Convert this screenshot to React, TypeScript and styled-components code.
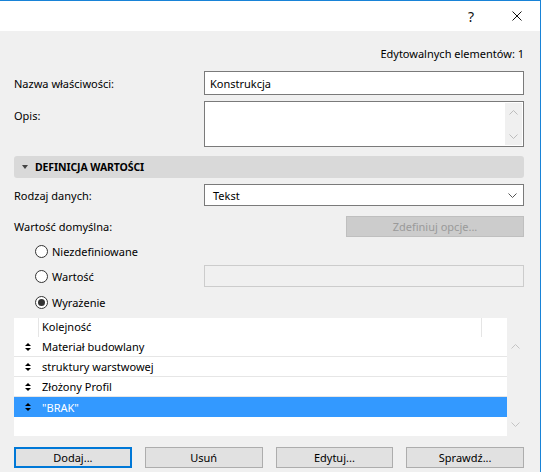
import React from "react";
import styled, { createGlobalStyle } from "styled-components";

const Global = createGlobalStyle`
  html, body { margin: 0; padding: 0; background: #f0f0f0; }
  * { box-sizing: border-box; }
`;

const Window = styled.div`
  width: 541px;
  height: 472px;
  border-top: 1px solid #1883d7;
  border-right: 1px solid #1883d7;
  background: #f0f0f0;
  display: flex;
  flex-direction: column;
  overflow: hidden;
  font-family: "Noto Sans", sans-serif;
  font-size: 11px;
  color: #000;
`;

const TitleBar = styled.div`
  height: 30px;
  flex: none;
  background: #fff;
  display: flex;
  justify-content: flex-end;
`;

const CaptionButton = styled.div`
  width: 46px;
  height: 30px;
  display: flex;
  align-items: center;
  justify-content: center;
  font-size: 14px;
  color: #111;
`;

const Content = styled.div`
  padding: 0 16px 0 14px;
  display: flex;
  flex-direction: column;
`;

const CountRow = styled.div`
  margin-top: 15px;
  height: 15px;
  line-height: 15px;
  text-align: right;
`;

const FieldRow = styled.div<{ $mt: number; $h: number; $top?: boolean }>`
  margin-top: ${(p) => p.$mt}px;
  height: ${(p) => p.$h}px;
  display: grid;
  grid-template-columns: 190px 1fr;
  align-items: ${(p) => (p.$top ? "start" : "center")};
`;

const Label = styled.div<{ $pt?: number }>`
  line-height: 15px;
  padding-top: ${(p) => p.$pt ?? 0}px;
`;

const TextInput = styled.div`
  height: 100%;
  background: #fff;
  border: 1px solid #7a7a7a;
  padding-left: 5px;
  display: flex;
  align-items: center;
`;

const TextArea = styled.div`
  height: 100%;
  background: #fff;
  border: 1px solid #7a7a7a;
  display: flex;
  justify-content: flex-end;
  padding: 1px;
`;

const AreaScroll = styled.div`
  width: 17px;
  background: #f0f0f0;
  display: flex;
  flex-direction: column;
  justify-content: space-between;
  align-items: center;
  padding: 7px 0 6px;
`;

const SectionBar = styled.div`
  margin-top: 9px;
  height: 22px;
  background: #d9d9d9;
  border-radius: 3px;
  display: flex;
  align-items: center;
  padding-left: 8px;
  gap: 7px;
  font-weight: 700;
  font-size: 10.5px;
  letter-spacing: -0.1px;
`;

const Select = styled.div`
  height: 100%;
  background: #fff;
  border: 1px solid #7a7a7a;
  padding: 0 6px 0 8px;
  display: flex;
  align-items: center;
  justify-content: space-between;
`;

const ActionRow = styled.div`
  margin-top: 10px;
  height: 21px;
  display: grid;
  grid-template-columns: 1fr 178px;
  align-items: center;
`;

const DisabledButton = styled.div`
  height: 100%;
  background: #cccccc;
  border: 1px solid #bfbfbf;
  color: #9a9a9a;
  display: flex;
  align-items: center;
  justify-content: center;
`;

const RadioLabel = styled.div`
  display: flex;
  align-items: center;
  gap: 4px;
  padding-left: 21px;
  line-height: 15px;
`;

const RadioCircle = styled.span<{ $checked?: boolean }>`
  width: 13px;
  height: 13px;
  border-radius: 50%;
  border: 1px solid #333;
  background: #fff;
  display: flex;
  align-items: center;
  justify-content: center;
  &::after {
    content: "";
    width: 7px;
    height: 7px;
    border-radius: 50%;
    background: ${(p) => (p.$checked ? "#333" : "transparent")};
  }
`;

const DisabledInput = styled.div`
  height: 100%;
  background: #f0f0f0;
  border: 1px solid #cccccc;
`;

const ListWrap = styled.div`
  margin-top: 6px;
  height: 118px;
  display: grid;
  grid-template-columns: 1fr 17px;
`;

const ListBody = styled.div`
  background: #fff;
  display: flex;
  flex-direction: column;
`;

const HeaderRow = styled.div`
  height: 19px;
  display: grid;
  grid-template-columns: 25px 1fr 25px;
`;

const HeaderCell = styled.div<{ $divider?: boolean }>`
  border-right: ${(p) => (p.$divider ? "1px solid #e5e5e5" : "none")};
  padding-left: 3px;
  line-height: 18px;
`;

const Row = styled.div<{ $selected?: boolean; $last?: boolean }>`
  height: 20px;
  display: grid;
  grid-template-columns: 25px 1fr;
  align-items: center;
  background: ${(p) => (p.$selected ? "#3399ff" : "#fff")};
  color: ${(p) => (p.$selected ? "#fff" : "#000")};
  border-bottom: ${(p) => (p.$last ? "none" : "1px solid #e6e6e6")};
`;

const SortCell = styled.div`
  display: flex;
  justify-content: center;
  padding-left: 2px;
`;

const RowText = styled.div`
  padding-left: 3px;
  line-height: 15px;
`;

const ListScroll = styled.div`
  margin-top: 19px;
  display: flex;
  flex-direction: column;
  justify-content: space-between;
  align-items: center;
  padding: 7px 0 9px;
`;

const ButtonRow = styled.div`
  margin-top: 11px;
  height: 21px;
  display: grid;
  grid-template-columns: repeat(4, 1fr);
  gap: 13px;
`;

const Button = styled.div<{ $focused?: boolean }>`
  height: 100%;
  background: #e1e1e1;
  border: ${(p) => (p.$focused ? "2px solid #0078d7" : "1px solid #adadad")};
  display: flex;
  align-items: center;
  justify-content: center;
`;

const Chevron = ({ up, color = "#bdbdbd" }: { up?: boolean; color?: string }) => (
  <svg width="9" height="5" viewBox="0 0 9 5">
    <polyline
      points={up ? "0.5,4.5 4.5,0.5 8.5,4.5" : "0.5,0.5 4.5,4.5 8.5,0.5"}
      fill="none"
      stroke={color}
      strokeWidth="1"
    />
  </svg>
);

const SortIcon = () => (
  <svg width="6" height="8" viewBox="0 0 6 8">
    <polygon points="0,3 3,0 6,3" fill="#000" />
    <polygon points="0,5 3,8 6,5" fill="#000" />
  </svg>
);

const rows = ["Materiał budowlany", "struktury warstwowej", "Złożony Profil", "\"BRAK\""];

export default function App() {
  return (
    <>
      <Global />
      <Window>
        <TitleBar>
          <CaptionButton>?</CaptionButton>
          <CaptionButton>
            <svg width="10" height="10" viewBox="0 0 10 10">
              <path d="M0.5 0.5 L9.5 9.5 M9.5 0.5 L0.5 9.5" stroke="#111" strokeWidth="1" />
            </svg>
          </CaptionButton>
        </TitleBar>
        <Content>
          <CountRow>Edytowalnych elementów: 1</CountRow>
          <FieldRow $mt={10} $h={24}>
            <Label>Nazwa właściwości:</Label>
            <TextInput>Konstrukcja</TextInput>
          </FieldRow>
          <FieldRow $mt={6} $h={46} $top>
            <Label $pt={7}>Opis:</Label>
            <TextArea>
              <AreaScroll>
                <Chevron up />
                <Chevron />
              </AreaScroll>
            </TextArea>
          </FieldRow>
          <SectionBar>
            <svg width="6" height="4" viewBox="0 0 6 4">
              <polygon points="0,0 6,0 3,4" fill="#444" />
            </svg>
            DEFINICJA WARTOŚCI
          </SectionBar>
          <FieldRow $mt={6} $h={22}>
            <Label>Rodzaj danych:</Label>
            <Select>
              Tekst
              <Chevron color="#555" />
            </Select>
          </FieldRow>
          <ActionRow>
            <Label>Wartość domyślna:</Label>
            <DisabledButton>Zdefiniuj opcje...</DisabledButton>
          </ActionRow>
          <FieldRow $mt={4} $h={20}>
            <RadioLabel>
              <RadioCircle />
              Niezdefiniowane
            </RadioLabel>
          </FieldRow>
          <FieldRow $mt={4} $h={22}>
            <RadioLabel>
              <RadioCircle />
              Wartość
            </RadioLabel>
            <DisabledInput />
          </FieldRow>
          <FieldRow $mt={5} $h={20}>
            <RadioLabel>
              <RadioCircle $checked />
              Wyrażenie
            </RadioLabel>
          </FieldRow>
          <ListWrap>
            <ListBody>
              <HeaderRow>
                <HeaderCell $divider />
                <HeaderCell $divider>Kolejność</HeaderCell>
                <HeaderCell />
              </HeaderRow>
              {rows.map((r, i) => (
                <Row key={r} $selected={i === 3} $last={i === 3}>
                  <SortCell>
                    <SortIcon />
                  </SortCell>
                  <RowText>{r}</RowText>
                </Row>
              ))}
            </ListBody>
            <ListScroll>
              <Chevron up color="#c4c4c4" />
              <Chevron color="#c4c4c4" />
            </ListScroll>
          </ListWrap>
          <ButtonRow>
            <Button $focused>Dodaj...</Button>
            <Button>Usuń</Button>
            <Button>Edytuj...</Button>
            <Button>Sprawdź...</Button>
          </ButtonRow>
        </Content>
      </Window>
    </>
  );
}
